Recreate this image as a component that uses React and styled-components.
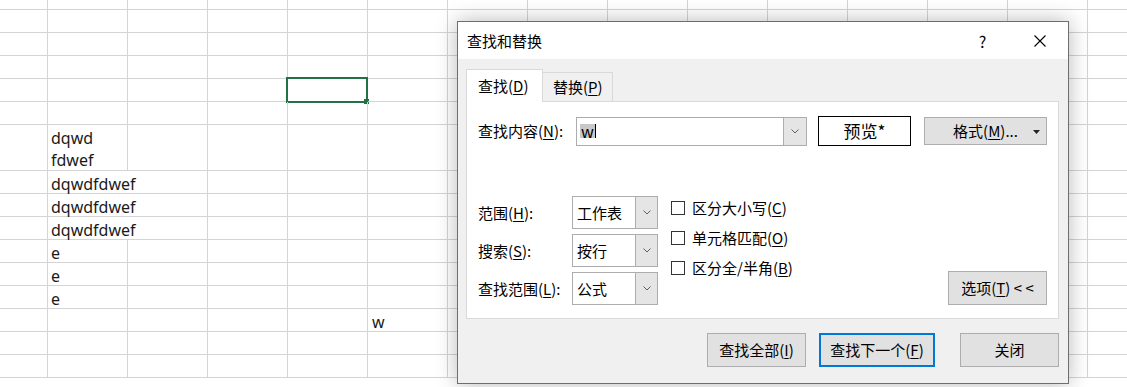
import styled, { createGlobalStyle } from "styled-components";

const GlobalStyle = createGlobalStyle`
  html, body {
    margin: 0;
    padding: 0;
    background: #ffffff;
  }
  #root {
    position: relative;
    width: 1127px;
    height: 387px;
    overflow: hidden;
  }
`;

const Sheet = styled.div`
  display: grid;
  grid-template-columns: 48px repeat(14, 80px);
  grid-template-rows: 10px repeat(5, 23px) 46px repeat(10, 23px);
  font-family: "Noto Sans", "Liberation Sans", sans-serif;
  font-size: 16px;
  color: #1a1a1a;
`;

const Cell = styled.div`
  position: relative;
  box-sizing: border-box;
  grid-column: span ${(p) => p.$span || 1};
  border-right: 1px solid #d4d4d4;
  border-bottom: 1px solid #d4d4d4;
  padding: 2px 0 0 ${(p) => p.$pad || 3}px;
  line-height: 22px;
  white-space: pre-line;
`;

const Selection = styled.div`
  position: absolute;
  left: -2px;
  top: -2px;
  right: -1px;
  bottom: -2px;
  border: 2px solid #217346;
  pointer-events: none;
`;

const Handle = styled.span`
  position: absolute;
  right: -3px;
  bottom: -3px;
  width: 5px;
  height: 5px;
  background: #217346;
`;

const Dialog = styled.div`
  position: absolute;
  left: 457px;
  top: 21px;
  width: 612px;
  height: 363px;
  box-sizing: border-box;
  display: flex;
  flex-direction: column;
  border: 1px solid #6e6e6e;
  background: #f0f0f0;
  box-shadow: 0 0 20px rgba(0, 0, 0, 0.28);
  font-family: "Noto Sans CJK SC", "Noto Sans", sans-serif;
  font-size: 15px;
  line-height: 20px;
  color: #000;
`;

const TitleBar = styled.div`
  height: 37px;
  display: flex;
  align-items: center;
  background: #fff;
  padding-left: 9px;
`;

const Title = styled.div`
  flex: 1;
`;

const Caption = styled.div`
  width: 57px;
  height: 37px;
  display: flex;
  align-items: center;
  justify-content: center;
  font-size: 16px;
`;

const Body = styled.div`
  flex: 1;
  display: flex;
  flex-direction: column;
  padding: 10px 9px 16px 8px;
`;

const Tabs = styled.div`
  display: flex;
  align-items: flex-end;
  margin-bottom: -1px;
  position: relative;
  z-index: 1;
`;

const Tab = styled.div`
  box-sizing: border-box;
  width: ${(p) => (p.$active ? 77 : 71)}px;
  height: ${(p) => (p.$active ? 33 : 29)}px;
  margin-bottom: ${(p) => (p.$active ? 0 : 1)}px;
  margin-left: ${(p) => (p.$active ? 0 : -1)}px;
  display: flex;
  align-items: center;
  padding-left: ${(p) => (p.$active ? 11 : 10)}px;
  background: ${(p) => (p.$active ? "#fff" : "#f0f0f0")};
  border: 1px solid #d9d9d9;
  border-bottom: none;
`;

const Panel = styled.div`
  box-sizing: border-box;
  height: 218px;
  display: flex;
  flex-direction: column;
  justify-content: space-between;
  padding: 14px 11px 13px 11px;
  background: #fff;
  border: 1px solid #d9d9d9;
`;

const FindRow = styled.div`
  display: flex;
  align-items: center;
  height: 30px;
`;

const Label = styled.div`
  width: ${(p) => p.$w}px;
  flex-shrink: 0;
  white-space: nowrap;
`;

const Combo = styled.div`
  box-sizing: border-box;
  width: ${(p) => p.$w}px;
  height: ${(p) => p.$h}px;
  display: flex;
  align-items: stretch;
  border: 1px solid #adadad;
  background: #fff;
  flex-shrink: 0;
`;

const ComboText = styled.div`
  flex: 1;
  display: flex;
  align-items: center;
  padding-left: ${(p) => p.$pad}px;
`;

const Selected = styled.span`
  display: inline-block;
  height: 14px;
  line-height: 14px;
  padding: 0 1px;
  font-size: 16px;
  background: #c8c8c8;
  border-right: 1px solid #000;
`;

const DropButton = styled.div`
  width: ${(p) => p.$w}px;
  display: flex;
  align-items: center;
  justify-content: center;
  background: #e5e5e5;
  border-left: 1px solid #adadad;
`;

const Preview = styled.div`
  box-sizing: border-box;
  width: 93px;
  height: 30px;
  margin-left: 11px;
  display: flex;
  align-items: center;
  justify-content: center;
  border: 1px solid #000;
  font-size: 17px;
`;

const Button = styled.div`
  position: relative;
  box-sizing: border-box;
  width: ${(p) => p.$w}px;
  height: ${(p) => p.$h || 34}px;
  margin-left: ${(p) => p.$ml || 0}px;
  display: flex;
  align-items: center;
  justify-content: center;
  background: #e1e1e1;
  border: ${(p) => (p.$default ? "2px solid #0078d7" : "1px solid #adadad")};
  white-space: nowrap;
  flex-shrink: 0;
`;

const OptionsButton = styled(Button)`
  margin-left: auto;
`;

const Caret = styled.svg`
  position: absolute;
  right: 6px;
  top: 12px;
`;

const Lower = styled.div`
  display: flex;
  align-items: flex-end;
`;

const Fields = styled.div`
  display: grid;
  grid-template-columns: 94px 86px;
  grid-auto-rows: 33px;
  row-gap: 5px;
  align-items: center;
`;

const Checks = styled.div`
  align-self: flex-start;
  margin: -3px 0 0 13px;
  display: flex;
  flex-direction: column;
`;

const CheckRow = styled.div`
  height: 30px;
  display: flex;
  align-items: center;
  gap: 7px;
`;

const Box = styled.span`
  box-sizing: border-box;
  width: 14px;
  height: 14px;
  border: 1px solid #333;
  background: #fff;
`;

const Footer = styled.div`
  display: flex;
  justify-content: flex-end;
  margin-top: 14px;
`;

const Key = styled.u`
  text-underline-offset: 2px;
`;

const Chevron = () => (
  <svg width="8" height="5" viewBox="0 0 8 5">
    <polyline points="0.5,0.5 4,4 7.5,0.5" fill="none" stroke="#606060" strokeWidth="1" />
  </svg>
);

const cells = {
  "6-1": { text: "dqwd\nfdwef" },
  "7-1": { text: "dqwdfdwef", span: 2 },
  "8-1": { text: "dqwdfdwef", span: 2 },
  "9-1": { text: "dqwdfdwef", span: 2 },
  "10-1": { text: "e" },
  "11-1": { text: "e" },
  "12-1": { text: "e" },
  "13-5": { text: "w", pad: 4 },
};

function SheetGrid() {
  const out = [];
  for (let r = 0; r < 16; r++) {
    for (let c = 0; c < 15; c++) {
      const cell = cells[`${r}-${c}`];
      out.push(
        <Cell key={`${r}-${c}`} $span={cell?.span} $pad={cell?.pad}>
          {cell?.text}
          {r === 4 && c === 4 && (
            <Selection>
              <Handle />
            </Selection>
          )}
        </Cell>
      );
      if (cell?.span) c += cell.span - 1;
    }
  }
  return <Sheet>{out}</Sheet>;
}

const fields = [
  { label: "范围", key: "H", value: "工作表" },
  { label: "搜索", key: "S", value: "按行" },
  { label: "查找范围", key: "L", value: "公式" },
];

const checks = [
  { label: "区分大小写", key: "C" },
  { label: "单元格匹配", key: "O" },
  { label: "区分全/半角", key: "B" },
];

export default function App() {
  return (
    <>
      <GlobalStyle />
      <SheetGrid />
      <Dialog>
        <TitleBar>
          <Title>查找和替换</Title>
          <Caption>?</Caption>
          <Caption>
            <svg width="12" height="12" viewBox="0 0 12 12">
              <path d="M0.5 0.5 L11.5 11.5 M11.5 0.5 L0.5 11.5" stroke="#000" strokeWidth="1.1" />
            </svg>
          </Caption>
        </TitleBar>
        <Body>
          <Tabs>
            <Tab $active>
              查找(<Key>D</Key>)
            </Tab>
            <Tab>
              替换(<Key>P</Key>)
            </Tab>
          </Tabs>
          <Panel>
            <FindRow>
              <Label $w={98}>
                查找内容(<Key>N</Key>):
              </Label>
              <Combo $w={231} $h={29}>
                <ComboText $pad={3}>
                  <Selected>w</Selected>
                </ComboText>
                <DropButton $w={22}>
                  <Chevron />
                </DropButton>
              </Combo>
              <Preview>预览*</Preview>
              <Button $w={123} $h={28} $ml={13}>
                格式(<Key>M</Key>)...
                <Caret width="7" height="4" viewBox="0 0 7 4">
                  <polygon points="0,0 7,0 3.5,4" fill="#222" />
                </Caret>
              </Button>
            </FindRow>
            <Lower>
              <Fields>
                {fields.map((f) => [
                  <Label key={f.key + "l"}>
                    {f.label}(<Key>{f.key}</Key>):
                  </Label>,
                  <Combo key={f.key + "c"} $w={86} $h={33}>
                    <ComboText $pad={4}>{f.value}</ComboText>
                    <DropButton $w={21}>
                      <Chevron />
                    </DropButton>
                  </Combo>,
                ])}
              </Fields>
              <Checks>
                {checks.map((c) => (
                  <CheckRow key={c.key}>
                    <Box />
                    <span>
                      {c.label}(<Key>{c.key}</Key>)
                    </span>
                  </CheckRow>
                ))}
              </Checks>
              <OptionsButton $w={99} $h={34}>
                选项(<Key>T</Key>) &lt; &lt;
              </OptionsButton>
            </Lower>
          </Panel>
          <Footer>
            <Button $w={99}>
              查找全部(<Key>I</Key>)
            </Button>
            <Button $w={116} $ml={13} $default>
              查找下一个(<Key>F</Key>)
            </Button>
            <Button $w={99} $ml={25}>
              关闭
            </Button>
          </Footer>
        </Body>
      </Dialog>
    </>
  );
}
